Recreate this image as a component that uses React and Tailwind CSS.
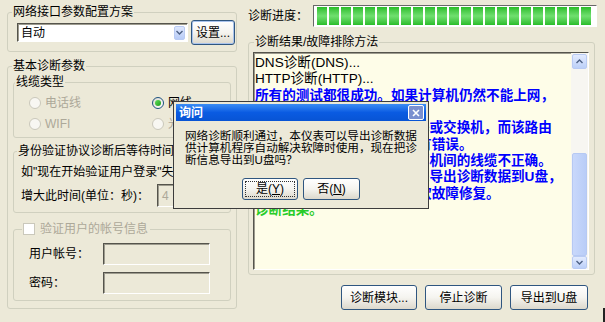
const sunken =
  'border border-t-[#55544c] border-l-[#55544c] border-b-white border-r-white shadow-[inset_1px_1px_0_#9d9b8e]'

function Group({ label, className = '', legendClass = 'ml-[4px] px-[1px]', children }) {
  return (
    <fieldset className={`rounded-[3px] border border-[#d0d0bf] ${className}`}>
      <legend className={`text-[12px] leading-[14px] ${legendClass}`}>{label}</legend>
      {children}
    </fieldset>
  )
}

function Btn({ children, className = '', focus = false }) {
  return (
    <button
      className={`flex items-center justify-center rounded-[3px] border border-[#2f5680] bg-linear-to-b from-white via-[#f5f4ef] to-[#dcd8cc] text-[12px] leading-[14px] text-black ${
        focus ? 'shadow-[inset_0_0_0_1px_#a9c3ec]' : ''
      } ${className}`}
    >
      {children}
    </button>
  )
}

function Radio({ label, checked = false, disabled = false }) {
  return (
    <div className="flex items-center gap-[4px]">
      <span
        className={`flex h-[12px] w-[12px] items-center justify-center rounded-full border ${
          disabled ? 'border-[#cac8bb] bg-[#f8f7f2]' : 'border-[#1c5180] bg-linear-to-br from-[#dcdad0] to-white'
        }`}
      >
        {checked && <span className="h-[6px] w-[6px] rounded-full bg-linear-to-br from-[#5fe05b] to-[#1b9a17]" />}
      </span>
      <span className={disabled ? 'text-[#aca899]' : 'text-black'}>{label}</span>
    </div>
  )
}

function LeftPane() {
  return (
    <div className="ml-[7px] mt-[5px] w-[230px]">
      <Group label="网络接口参数配置方案" className="h-[47px] w-[230px]">
        <div className="ml-[9px] mt-[1px] flex items-center gap-[3px]">
          <div className={`flex h-[19px] w-[171px] items-center justify-between bg-white pl-[3px] pr-[2px] ${sunken}`}>
            <span>自动</span>
            <span className="flex h-[14px] w-[11px] items-center justify-center rounded-[2px] border border-[#b9cbf3] bg-linear-to-b from-[#dfe8fd] to-[#b7cbf7]">
              <svg width="7" height="5" viewBox="0 0 7 5">
                <path d="M0.5 1 L3.5 4 L6.5 1" fill="none" stroke="#4d6185" strokeWidth="1.4" />
              </svg>
            </span>
          </div>
          <Btn focus className="h-[25px] w-[44px]">设置...</Btn>
        </div>
      </Group>

      <Group label="基本诊断参数" className="mt-[7px] h-[250px] w-[230px]">
        <div className="ml-[5px] mt-[2px]">
          <Group label="线缆类型" className="h-[63px] w-[218px]" legendClass="ml-[1px] px-[1px]">
            <div className="ml-[15px] mt-[7px] grid h-[13px] grid-cols-[123px_1fr] items-center">
              <Radio label="电话线" disabled />
              <Radio label="网线" checked />
            </div>
            <div className="ml-[15px] mt-[8px] grid h-[13px] grid-cols-[123px_1fr] items-center">
              <Radio label="WIFI" disabled />
              <Radio label="光纤" disabled />
            </div>
          </Group>

          <Group
            label="身份验证协议诊断后等待时间"
            className="mt-[6px] h-[69px] w-[218px]"
            legendClass="ml-[3px] px-[1px]"
          >
            <div className="ml-[7px] mt-[7px] whitespace-nowrap">如"现在开始验证用户登录"失败，</div>
            <div className="ml-[7px] mt-[5px] flex h-[23px] items-center">
              <span className="w-[136px]">增大此时间(单位：秒)：</span>
              <div className={`flex h-[23px] w-[68px] items-center pl-[4px] text-[#aca899] ${sunken}`}>4</div>
            </div>
          </Group>

          <Group
            label={
              <span className="flex items-center gap-[5px]">
                <span className="h-[12px] w-[12px] border border-[#cac8bb] bg-white" />
                <span className="text-[#aca899]">验证用户的帐号信息</span>
              </span>
            }
            className="mt-[9px] h-[79px] w-[218px]"
            legendClass="ml-[8px] pl-[1px] pr-[2px]"
          >
            <div className="ml-[15px] mt-[7px] flex h-[22px] items-center">
              <span className="w-[74px]">用户帐号：</span>
              <div className={`h-[22px] w-[107px] ${sunken}`} />
            </div>
            <div className="ml-[15px] mt-[7px] flex h-[22px] items-center">
              <span className="w-[74px]">密码：</span>
              <div className={`h-[22px] w-[107px] ${sunken}`} />
            </div>
          </Group>
        </div>
      </Group>
    </div>
  )
}

const lines = [
  { t: 'DNS诊断(DNS)...', c: 'text-black' },
  { t: 'HTTP诊断(HTTP)...', c: 'text-black' },
  { t: '所有的测试都很成功。如果计算机仍然不能上网，', c: 'font-bold text-[#0000ff]' },
  { t: '请检查以下几项：', c: 'font-bold text-[#0000ff]' },
  { t: '1.若计算机连接到的是路由器或交换机，而该路由', c: 'font-bold text-[#0000ff]' },
  { t: '器或交换机的网络配置可能有错误。', c: 'font-bold text-[#0000ff]' },
  { t: '2.也可能是路由器与这台计算机间的线缆不正确。', c: 'font-bold text-[#0000ff]' },
  { t: '3.如需专业人员帮助，可以先导出诊断数据到U盘，', c: 'font-bold text-[#0000ff]' },
  { t: '以便交给专业技术人员进行软故障修复。', c: 'font-bold text-[#0000ff]' },
  { t: '诊断结果。', c: 'font-bold text-[#28cc28]' },
]

function ScrollBar() {
  return (
    <div className="flex h-full w-[17px] flex-col bg-[#f7f6f1] px-[1px] pt-[1px]">
      <div className="flex h-[15px] items-center justify-center rounded-[2px] border border-[#b9cbf3] bg-linear-to-b from-[#e3ebfe] to-[#bcd0f8]">
        <svg width="7" height="5" viewBox="0 0 7 5">
          <path d="M0.5 4 L3.5 1 L6.5 4" fill="none" stroke="#4d6185" strokeWidth="1.4" />
        </svg>
      </div>
      <div className="h-[84px]" />
      <div className="h-[103px] rounded-[2px] border border-[#b6c9f3] bg-linear-to-r from-[#c9d8fb] to-[#b9cdf7]" />
      <div className="flex-1" />
      <div className="flex h-[13px] items-center justify-center rounded-[2px] border border-[#b9cbf3] bg-linear-to-b from-[#e3ebfe] to-[#bcd0f8]">
        <svg width="7" height="5" viewBox="0 0 7 5">
          <path d="M0.5 1 L3.5 4 L6.5 1" fill="none" stroke="#4d6185" strokeWidth="1.4" />
        </svg>
      </div>
    </div>
  )
}

function RightPane() {
  return (
    <div className="ml-[11px] w-[350px]">
      <div className="mt-[5px] flex h-[22px] items-center">
        <span className="w-[65px]">诊断进度：</span>
        <div className="flex h-[22px] w-[284px] items-center gap-[2px] border border-t-[#686868] border-l-[#686868] border-b-white border-r-white bg-white py-[1px] pl-[3px]">
          {Array.from({ length: 23 }).map((_, i) => (
            <span key={i} className="h-full w-[10px] bg-linear-to-b from-[#27bd27] via-[#6fdf6f] to-[#27bd27]" />
          ))}
        </div>
      </div>

      <Group label="诊断结果/故障排除方法" className="mt-[8px] h-[240px] w-[347px]" legendClass="ml-[5px] px-[1px]">
        <div className={`ml-[4px] mt-[3px] flex h-[218px] w-[336px] bg-[#fefde8] ${sunken}`}>
          <div className="flex-1 overflow-hidden whitespace-nowrap pl-[1px] pt-[2px] text-[13.6px] leading-[16.33px]">
            {lines.map((l, i) => (
              <div key={i} className={l.c}>
                {l.t}
              </div>
            ))}
          </div>
          <ScrollBar />
        </div>
      </Group>

      <div className="mt-[10px] flex justify-end gap-[8px] pr-[10px]">
        <Btn className="h-[25px] w-[76px]">诊断模块...</Btn>
        <Btn className="h-[25px] w-[77px]">停止诊断</Btn>
        <Btn className="h-[25px] w-[78px]">导出到U盘</Btn>
      </div>
    </div>
  )
}

function AskDialog() {
  return (
    <div className="absolute left-[173px] top-[101px] z-10 h-[108px] w-[256px] border border-[#3c3c3c] bg-[#ece9d8] p-[2px]">
      <div className="flex h-[17px] items-center justify-between bg-linear-to-b from-[#3a8cf4] via-[#0a5be2] to-[#0854d4] pl-[3px] pr-[2px]">
        <span className="text-[12px] font-bold leading-[14px] text-white">询问</span>
        <span className="flex h-[15px] w-[16px] items-center justify-center rounded-[2px] border border-white bg-[#7a8fd0]">
          <svg width="8" height="8" viewBox="0 0 8 8">
            <path d="M1 1 L7 7 M7 1 L1 7" stroke="white" strokeWidth="1.6" />
          </svg>
        </span>
      </div>
      <div className="ml-[9px] mt-[9px] text-[11.6px] leading-[12px]">
        <div>网络诊断顺利通过，本仪表可以导出诊断数据</div>
        <div>供计算机程序自动解决软障时使用，现在把诊</div>
        <div>断信息导出到U盘吗？</div>
      </div>
      <div className="mt-[12px] flex justify-center gap-[5px]">
        <Btn className="h-[22px] w-[56px] border-[#1d3f66] p-[2px]">
          <span className="flex h-full w-full items-center justify-center border border-dotted border-[#333]">
            是(<span className="underline">Y</span>)
          </span>
        </Btn>
        <Btn className="h-[22px] w-[57px]">
          否(<span className="underline">N</span>)
        </Btn>
      </div>
    </div>
  )
}

export default function App() {
  return (
    <div className="relative h-[322px] w-[605px] overflow-hidden bg-[#ece9d8] font-['Liberation_Sans','Noto_Sans_CJK_SC',sans-serif] text-[12px] leading-[14px] text-black">
      <div className="flex">
        <LeftPane />
        <RightPane />
      </div>
      <AskDialog />
      <div className="absolute bottom-0 right-0 h-[14px] w-[2px] bg-[#222]" />
    </div>
  )
}
